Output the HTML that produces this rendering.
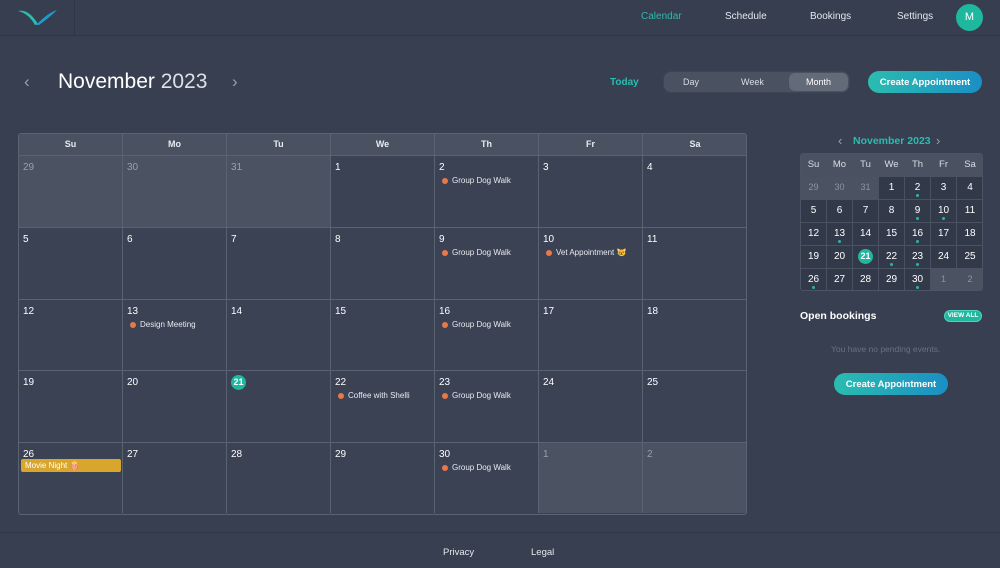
<!DOCTYPE html>
<html><head><meta charset="utf-8"><style>
*{box-sizing:border-box;margin:0;padding:0}
body{width:1000px;height:568px;background:#373f50;font-family:"Liberation Sans",sans-serif;color:#fff;position:relative;overflow:hidden}
.a{position:absolute}
.top{left:0;top:0;width:1000px;height:36px;border-bottom:1px solid #2f3645;background:#363e4f}
.nav{top:11px;font-size:10px;color:#e4e7ee}
.grid{left:18px;top:133px;width:729px;height:382px;border:1px solid #5a6372;border-radius:3px;overflow:hidden;display:grid;grid-template-columns:repeat(7,104px);grid-template-rows:22px 72px 72px 71px 72px 70px;background:#3a4253}
.grid div{border-right:1px solid #5a6372;border-bottom:1px solid #5a6372;position:relative;font-size:10px;padding:6px 0 0 4px}
.grid .h{background:#4a5261;text-align:center;font-weight:bold;font-size:9px;padding:5px 0 0;color:#e8eaf0}
.grid .o{background:#4b5363;color:#99a0ac}
.grid .l{border-bottom:0}
.ev{position:absolute;left:7px;top:20px;font-size:8px;color:#e8eaf0;white-space:nowrap}
.ev:before{content:"";display:inline-block;width:6px;height:6px;border-radius:50%;background:#e8784a;margin-right:4px;vertical-align:-0.5px}
.mini{left:800px;top:153px;width:183px;height:138px;border:1px solid #4c5463;border-radius:3px;overflow:hidden;display:grid;grid-template-columns:26px 26px 26px 26px 26px 26px 27px;grid-template-rows:23px repeat(6,23px);background:#323a4a}
.mini div{border-right:1px solid #4a5261;border-bottom:1px solid #4a5261;text-align:center;font-size:10px;padding-top:5px;position:relative}
.mini .h{background:#4a5261;color:#d8dce4;font-size:9.5px}
.mini .o{background:#4b5363;color:#8c93a0;font-size:9px}
.mini .d:after{content:"";position:absolute;left:11px;bottom:2px;width:3px;height:3px;border-radius:50%;background:#2ab5a0}
.btn{background:linear-gradient(90deg,#2bbcb0,#1a8fc4);font-size:9.5px;font-weight:bold;color:#fff;display:flex;align-items:center;justify-content:center}
</style></head><body>
<div class="a top"></div>
<div class="a" style="left:74px;top:0;width:1px;height:36px;background:#2f3645"></div>
<svg class="a" style="left:17px;top:8px" width="42" height="20" viewBox="0 0 42 20"><path d="M1 3 C8 1 15 6 21 16 L18 17 C14 10 9 5 1 3Z" fill="#2bbcb0"/><path d="M40 2 C33 4 26 10 19 17 L22 17 C29 12 35 7 40 2Z" fill="#1d9ad0"/></svg>
<div class="a nav" style="left:641px;color:#2bbcb0">Calendar</div>
<div class="a nav" style="left:725px">Schedule</div>
<div class="a nav" style="left:810px">Bookings</div>
<div class="a nav" style="left:897px">Settings</div>
<div class="a" style="left:956px;top:4px;width:27px;height:27px;border-radius:50%;background:#1fb79e;font-size:11px;text-align:center;line-height:27px">M</div>

<div class="a" style="left:24px;top:72px;font-size:17px;color:#9aa1ad">‹</div>
<div class="a" style="left:58px;top:70px;font-size:21px;color:#fff">November <span style="color:#dde0e6">2023</span></div>
<div class="a" style="left:232px;top:72px;font-size:17px;color:#9aa1ad">›</div>
<div class="a" style="left:610px;top:77px;font-size:10px;color:#2bbcb0;font-weight:bold">Today</div>
<div class="a" style="left:663px;top:71px;width:187px;height:22px;border-radius:8px;background:#4a5261;border:1px solid #3e4555"></div>
<div class="a" style="left:789px;top:73px;width:59px;height:18px;border-radius:6px;background:#636b79"></div>
<div class="a" style="left:683px;top:77px;font-size:9px;color:#d8dce4">Day</div>
<div class="a" style="left:741px;top:77px;font-size:9px;color:#d8dce4">Week</div>
<div class="a" style="left:806px;top:77px;font-size:9px;color:#fff">Month</div>
<div class="a btn" style="left:868px;top:71px;width:114px;height:22px;border-radius:11px">Create Appointment</div>

<div class="a grid">
<div class="h">Su</div><div class="h">Mo</div><div class="h">Tu</div><div class="h">We</div><div class="h">Th</div><div class="h">Fr</div><div class="h" style="border-right:0">Sa</div>
<div class="o">29</div><div class="o">30</div><div class="o">31</div><div>1</div><div>2<span class="ev">Group Dog Walk</span></div><div>3</div><div>4</div>
<div>5</div><div>6</div><div>7</div><div>8</div><div>9<span class="ev">Group Dog Walk</span></div><div>10<span class="ev">Vet Appointment 😿</span></div><div>11</div>
<div>12</div><div>13<span class="ev">Design Meeting</span></div><div>14</div><div>15</div><div>16<span class="ev">Group Dog Walk</span></div><div>17</div><div>18</div>
<div>19</div><div>20</div><div><span style="display:inline-block;width:15px;height:15px;border-radius:50%;background:#1fb79e;text-align:center;line-height:15px;font-size:9px;font-weight:bold;margin-top:-3px">21</span></div><div>22<span class="ev">Coffee with Shelli</span></div><div>23<span class="ev">Group Dog Walk</span></div><div>24</div><div>25</div>
<div class="l">26<span style="position:absolute;left:2px;top:16px;width:100px;height:13px;background:#d8a52d;border-radius:2px;font-size:8px;padding:2px 4px;color:#fff">Movie Night 🍿</span></div><div class="l">27</div><div class="l">28</div><div class="l">29</div><div class="l">30<span class="ev">Group Dog Walk</span></div><div class="o l">1</div><div class="o l" style="border-right:0">2</div>
</div>

<div class="a" style="left:838px;top:133px;font-size:13px;color:#9aa1ad">‹</div>
<div class="a" style="left:853px;top:135px;font-size:10.5px;color:#2bbcb0;font-weight:bold">November 2023</div>
<div class="a" style="left:936px;top:133px;font-size:13px;color:#9aa1ad">›</div>
<div class="a mini">
<div class="h">Su</div><div class="h">Mo</div><div class="h">Tu</div><div class="h">We</div><div class="h">Th</div><div class="h">Fr</div><div class="h">Sa</div>
<div class="o">29</div><div class="o">30</div><div class="o">31</div><div>1</div><div class="d">2</div><div>3</div><div>4</div>
<div>5</div><div>6</div><div>7</div><div>8</div><div class="d">9</div><div class="d">10</div><div>11</div>
<div>12</div><div class="d">13</div><div>14</div><div>15</div><div class="d">16</div><div>17</div><div>18</div>
<div>19</div><div>20</div><div><span style="display:inline-block;width:15px;height:15px;border-radius:50%;background:#1fb79e;line-height:15px;font-size:9px;font-weight:bold;margin-top:-2px">21</span></div><div class="d">22</div><div class="d">23</div><div>24</div><div>25</div>
<div class="d">26</div><div>27</div><div>28</div><div>29</div><div class="d">30</div><div class="o">1</div><div class="o">2</div>
</div>
<div class="a" style="left:800px;top:310px;font-size:10.5px;font-weight:bold">Open bookings</div>
<div class="a" style="left:944px;top:310px;width:38px;height:12px;border-radius:6px;background:#1fb79e;border:1px solid #4fd6c0;font-size:6.5px;font-weight:bold;text-align:center;line-height:10px">VIEW ALL</div>
<div class="a" style="left:831px;top:344px;font-size:8.5px;color:#6a7280">You have no pending events.</div>
<div class="a btn" style="left:834px;top:373px;width:114px;height:22px;border-radius:11px">Create Appointment</div>

<div class="a" style="left:0;top:532px;width:1000px;height:1px;background:#2f3645"></div>
<div class="a" style="left:443px;top:547px;font-size:9.5px;color:#e4e7ee">Privacy</div>
<div class="a" style="left:531px;top:547px;font-size:9.5px;color:#e4e7ee">Legal</div>
</body></html>
